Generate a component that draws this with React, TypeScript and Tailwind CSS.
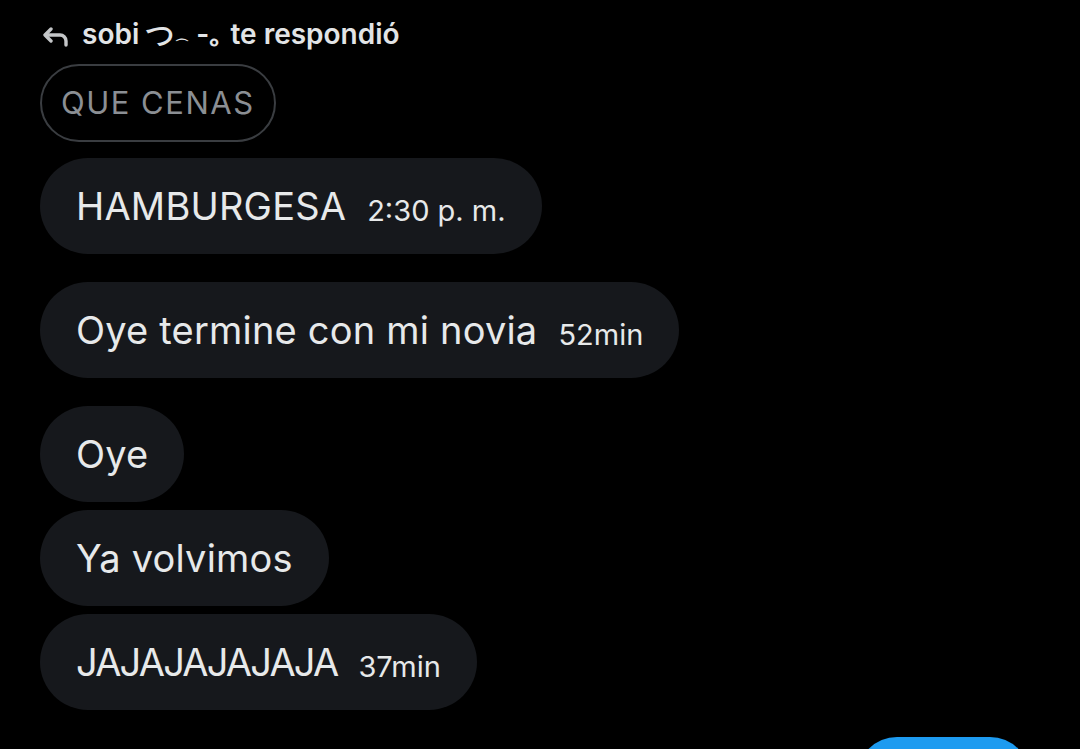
import React from 'react';

type Msg = { text: string; time?: string; gap: string; tight?: boolean };

const messages: Msg[] = [
  { text: 'HAMBURGESA', time: '2:30 p. m.', gap: 'mt-4' },
  { text: 'Oye termine con mi novia', time: '52min', gap: 'mt-7' },
  { text: 'Oye', gap: 'mt-7' },
  { text: 'Ya volvimos', gap: 'mt-2' },
  { text: 'JAJAJAJAJAJA', time: '37min', gap: 'mt-2', tight: true },
];

const ReplyArrow: React.FC = () => (
  <svg width="28" height="20" viewBox="0 0 28 20" fill="none" className="text-[#c4c6c8]">
    <path d="M9 2 3 8l6 6" stroke="currentColor" strokeWidth="3.4" strokeLinecap="round" strokeLinejoin="round" />
    <path d="M4 8h14a6 6 0 0 1 6 6v4" stroke="currentColor" strokeWidth="3.4" strokeLinecap="round" />
  </svg>
);

const App: React.FC = () => {
  return (
    <div className="h-[749px] overflow-hidden bg-black text-[#e7e9ea] font-['Inter','Liberation_Sans',sans-serif]">
      <div className="flex flex-col items-start px-10 pt-4">
        <div className="flex items-center gap-3 pl-[2px] text-[28px] font-semibold text-[#e2e4e6]">
          <ReplyArrow />
          <span className="leading-[36px]">
            sobi つ<span className="relative top-[6px] text-[14px]">⌒</span> -｡ te respondió
          </span>
        </div>

        <div className="mt-[7px] h-[78px] flex items-center rounded-full border-2 border-[#3a3d41] px-[19px] text-[31px] tracking-[1.5px] text-[#8b8f94]">
          QUE CENAS
        </div>

        {messages.map((m, i) => (
          <div
            key={i}
            className={`${m.gap} h-24 flex items-center gap-[21px] rounded-full bg-[#16181c] pl-9 pr-9`}
          >
            <span className={`text-[38px] leading-none ${m.tight ? 'tracking-[-1.8px]' : 'tracking-[0.2px]'}`}>
              {m.text}
            </span>
            {m.time && (
              <span className="pt-2 text-[29px] leading-none">
                {m.time}
              </span>
            )}
          </div>
        ))}

        <div className="mt-[27px] self-end mr-[10px] h-20 w-[173px] rounded-t-[40px] bg-[#1d9bf0]" />
      </div>
    </div>
  );
};

export default App;
